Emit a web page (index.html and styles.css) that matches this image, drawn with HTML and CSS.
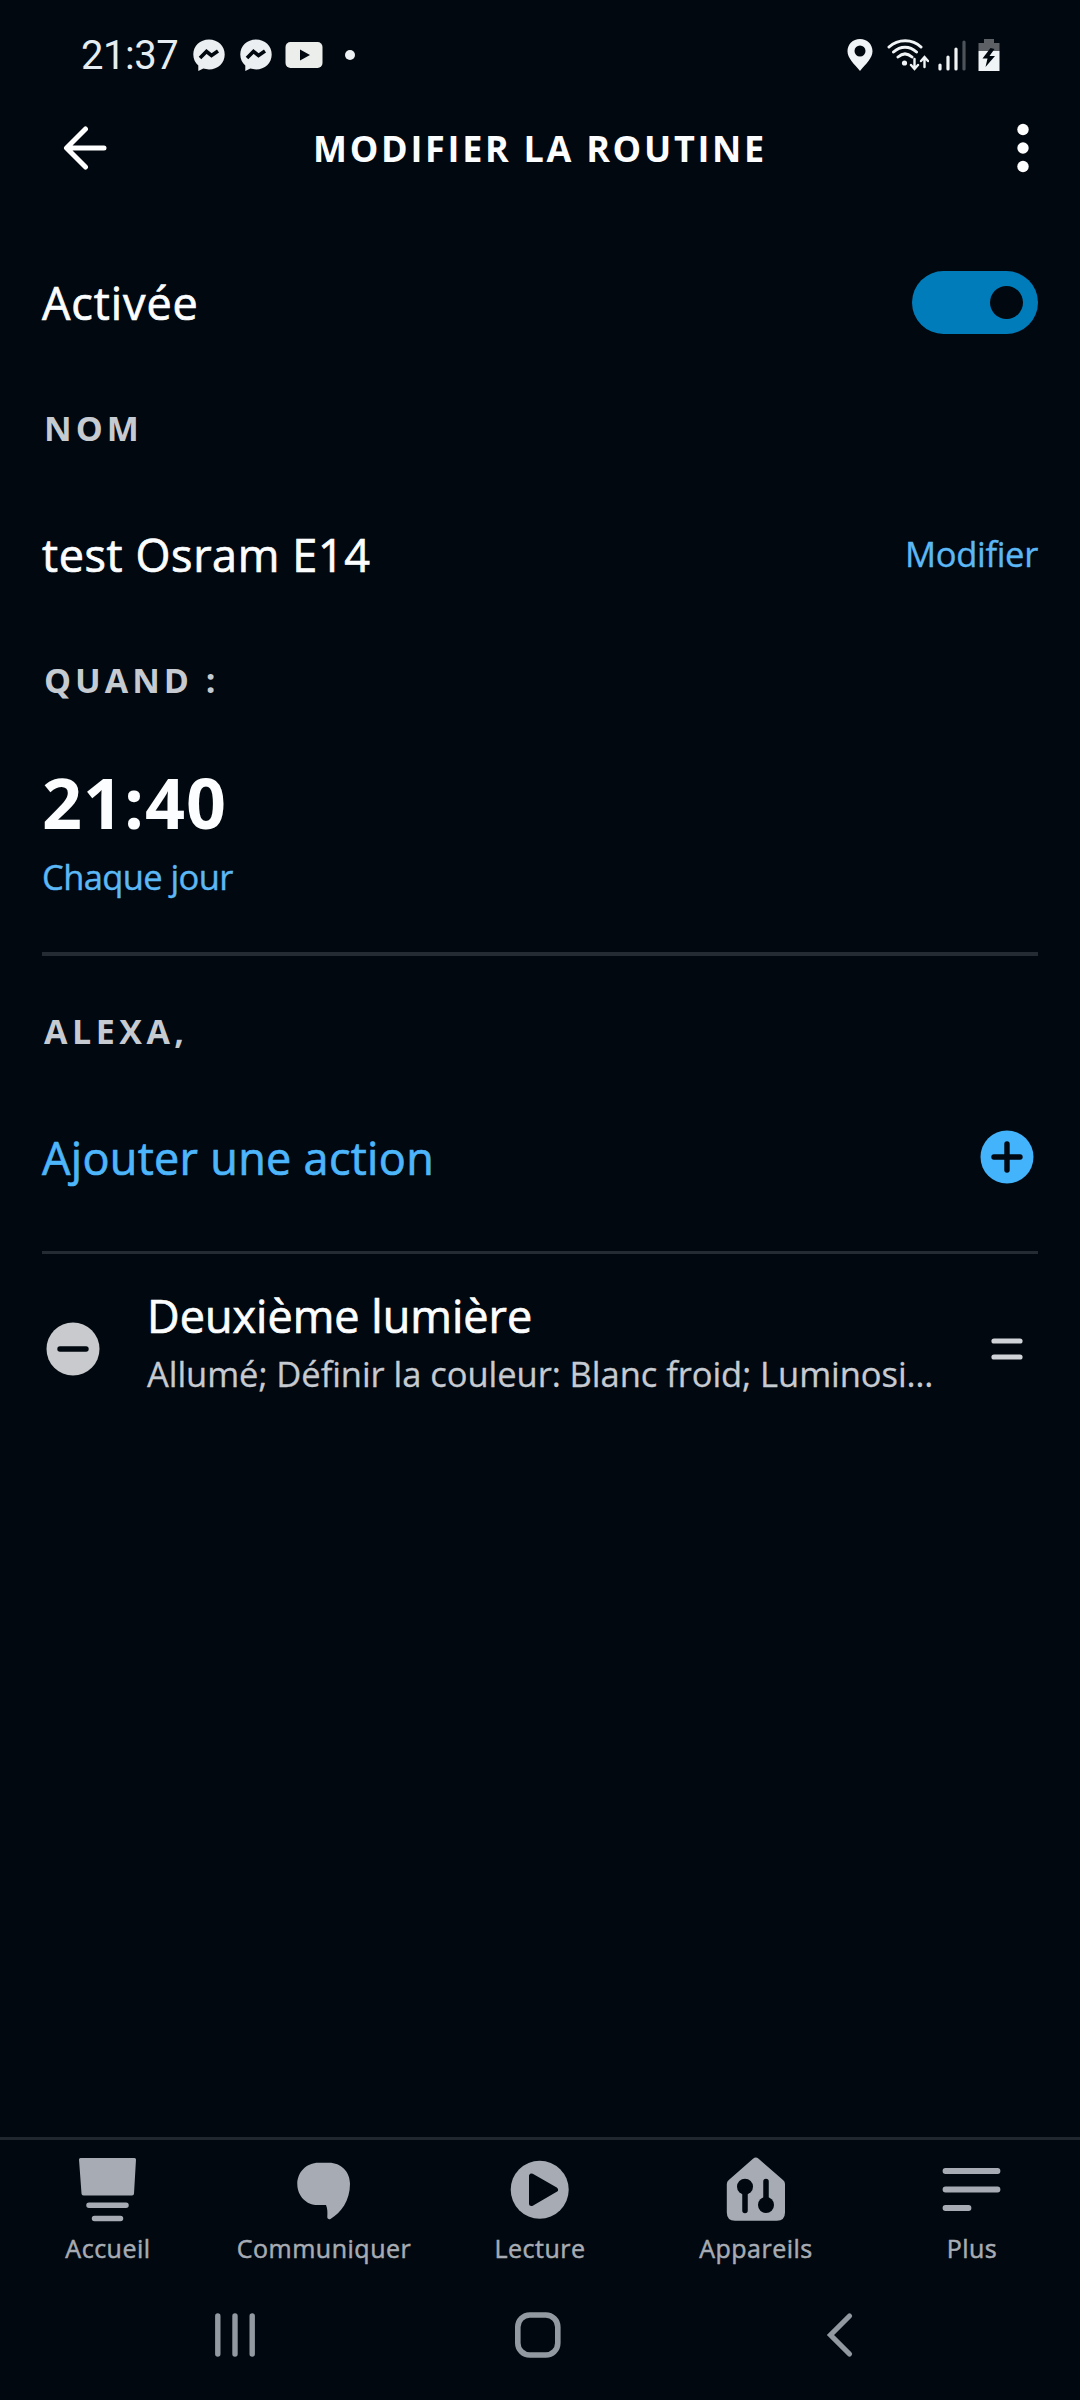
FILE: index.html
```html
<!DOCTYPE html>
<html lang="fr">
<head>
  <meta charset="UTF-8" />
  <title>Modifier la routine</title>
  <link rel="stylesheet" href="styles.css">
</head>
<body>

  <div class="status-bar">
    <span class="clock">21:37</span>
    <svg class="messenger" width="32" height="32" viewBox="0 0 32 32">
      <path d="M16 .5C7 .5 .3 7 .3 15.5c0 4.600 1.900 8.300 5 11V32l5-2.400c1.800.5 3.700.8 5.700.8 9 0 15.700-6.500 15.700-15S25 .5 16 .5z" fill="#eceff2"/>
      <path d="M7 19l6.500-6.500 5 4 6.500-4.500" fill="none" stroke="#01080f" stroke-width="3.600"/>
    </svg>
    <svg class="messenger" width="32" height="32" viewBox="0 0 32 32">
      <path d="M16 .5C7 .5 .3 7 .3 15.5c0 4.600 1.900 8.300 5 11V32l5-2.400c1.800.5 3.700.8 5.700.8 9 0 15.700-6.500 15.700-15S25 .5 16 .5z" fill="#eceff2"/>
      <path d="M7 19l6.500-6.500 5 4 6.500-4.500" fill="none" stroke="#01080f" stroke-width="3.600"/>
    </svg>
    <svg class="youtube" width="38" height="26" viewBox="0 0 38 26">
      <rect x="0.500" y="0" width="37" height="26" rx="5" fill="#eceeec"/>
      <path d="M15 7.500l10 5.500-10 5.500z" fill="#01080f"/>
    </svg>
    <span class="dot"></span>
    <div class="status-right">
      <svg width="26" height="32" viewBox="0 0 26 32">
        <path d="M13 0C5.800 0 .5 5.300 .5 12.300 .5 19 7 25 13 32c6-7 12.500-13 12.500-19.700C25.500 5.300 20.200 0 13 0z" fill="#f1f4f6"/>
        <circle cx="13" cy="12" r="5.500" fill="#01080f"/>
      </svg>
      <svg class="wifi" width="42" height="32" viewBox="0 0 42 32">
        <g fill="none" stroke="#f1f4f6" stroke-width="3" stroke-linecap="round">
          <path d="M2 8c9-8.500 23.500-8.500 32 0M6.500 13c7-6.500 16-6.500 23 0M11 18c4.500-4 9.500-4 14 0"/>
          <path d="M27.500 20v9M24 26l3.500 4 3.500-4M37.500 28v-9M34 22l3.500-4 3.500 4" stroke-width="2.400"/>
        </g>
        <circle cx="17.500" cy="24" r="2.600" fill="#f1f4f6"/>
      </svg>
      <svg class="signal" width="28" height="32" viewBox="0 0 28 32">
        <g stroke-width="3.200" stroke-linecap="round" stroke="#f1f4f6">
          <path d="M2 26v4M10 18v12M18 10v20"/>
          <path d="M26 3v27" stroke="#4d5359"/>
        </g>
      </svg>
      <svg width="22" height="32" viewBox="0 0 22 32">
        <path d="M6 0h10v4h5.500v8H.5V4H6z" fill="#5d6165"/>
        <path d="M.5 12h21v20H.5z" fill="#f1f4f6"/>
        <path d="M12.500 9L4.500 19.500h5L7.500 28 17 17h-5.500l5-7z" fill="#01080f"/>
      </svg>
    </div>
  </div>

  <header class="header">
    <svg width="44" height="44" viewBox="0 0 44 44">
      <path d="M41 22H4M22.500 3L3.500 22l19 19" fill="none" stroke="#fff" stroke-width="5" stroke-linecap="round" stroke-linejoin="round"/>
    </svg>
    <h1>MODIFIER LA ROUTINE</h1>
    <svg class="menu" width="12" height="50" viewBox="0 0 12 50">
      <g fill="#fff"><circle cx="6" cy="6.500" r="5.700"/><circle cx="6" cy="25" r="5.700"/><circle cx="6" cy="43.500" r="5.700"/></g>
    </svg>
  </header>

  <main>
    <div class="row">
      <span class="text activated">Activée</span>
      <div class="toggle"><div class="knob"></div></div>
    </div>

    <h2>NOM</h2>
    <div class="row">
      <span class="text name">test Osram E14</span>
      <a class="link">Modifier</a>
    </div>

    <h2>QUAND :</h2>
    <div class="when">
      <div class="time">21:40</div>
      <a class="link">Chaque jour</a>
    </div>

    <h2 class="alexa">ALEXA,</h2>
    <div class="add-action">
      <span class="text">Ajouter une action</span>
      <svg width="54" height="54" viewBox="0 0 54 54">
        <circle cx="27" cy="27" r="26.500" fill="#43b3fc"/>
        <path d="M14 27h26M27 14v26" stroke="#01080f" stroke-width="5.400" stroke-linecap="round"/>
      </svg>
    </div>

    <div class="action">
      <svg width="54" height="54" viewBox="0 0 54 54">
        <circle cx="27" cy="27" r="26.500" fill="#c8cacd"/>
        <path d="M14 27h26" stroke="#01080f" stroke-width="5.400" stroke-linecap="round"/>
      </svg>
      <div class="action-info">
        <div class="text device">Deuxième lumière</div>
        <div class="details">Allumé; Définir la couleur: Blanc froid; Luminosi…</div>
      </div>
      <svg class="handle" width="32" height="22" viewBox="0 0 32 22">
        <path d="M3 3h26M3 19h26" stroke="#d0d3d8" stroke-width="5.200" stroke-linecap="round"/>
      </svg>
    </div>
  </main>

  <nav class="tabs">
    <div class="tab">
      <svg width="68" height="68" viewBox="0 0 68 68">
        <path d="M6.500 4h54q1.500 0 1.500 1.500l-2 34q0 2-2 2H9.500q-2 0-2-2l-2.500-34Q5 4 6.500 4z" fill="#a7acb4"/>
        <path d="M15 51.300h37M20.500 64.500h26" stroke="#a7acb4" stroke-width="5.500" stroke-linecap="round"/>
      </svg>
      <span>Accueil</span>
    </div>
    <div class="tab">
      <svg width="68" height="68" viewBox="0 0 68 68">
        <path d="M28.500 8.700h10.500c12 0 21 9 21 21 0 17-9 29-19.500 35.200-1.500.8-3.300 0-3.200-1.800.3-5 .2-8.500-1.300-12H28c-12 0-20.700-9.500-20.700-21.200S16.500 8.700 28.500 8.700z" fill="#a7acb4"/>
      </svg>
      <span>Communiquer</span>
    </div>
    <div class="tab">
      <svg width="68" height="68" viewBox="0 0 68 68">
        <circle cx="33.700" cy="35.700" r="29" fill="#a7acb4"/>
        <path d="M25.500 22v27.500l24-13.800z" fill="#01080f" stroke="#01080f" stroke-width="5" stroke-linejoin="round"/>
      </svg>
      <span>Lecture</span>
    </div>
    <div class="tab">
      <svg width="68" height="68" viewBox="0 0 68 68">
        <path d="M31 4.800q2.800-2.600 5.600 0L61 26q2 1.700 2 4v28.500q0 8.200-8.200 8.200H13q-8.200 0-8.200-8.200V30q0-2.300 2-4z" fill="#a7acb4"/>
        <g fill="#01080f" stroke="#01080f" stroke-linecap="round">
          <circle cx="23" cy="32.700" r="8" stroke="none"/><circle cx="44" cy="51" r="8" stroke="none"/>
          <path d="M23 35v21.500M44 27.500V50" stroke-width="5.500"/>
        </g>
      </svg>
      <span>Appareils</span>
    </div>
    <div class="tab">
      <svg width="68" height="68" viewBox="0 0 68 68">
        <path d="M7.500 17h52M7.500 35.500h52M7.500 54h23" stroke="#a7acb4" stroke-width="5.800" stroke-linecap="round"/>
      </svg>
      <span>Plus</span>
    </div>
  </nav>

  <div class="system-nav">
    <svg width="48" height="48" viewBox="0 0 48 48">
      <path d="M6.800 5v38M24 5v38M41.200 5v38" stroke="#9399a0" stroke-width="5.400" stroke-linecap="round"/>
    </svg>
    <svg width="48" height="48" viewBox="0 0 48 48">
      <rect x="3.800" y="4" width="40" height="40" rx="12" fill="none" stroke="#9399a0" stroke-width="5.600"/>
    </svg>
    <svg width="48" height="48" viewBox="0 0 48 48">
      <path d="M33.500 5L14.500 24l19 19" fill="none" stroke="#9399a0" stroke-width="5.200" stroke-linecap="round"/>
    </svg>
  </div>

</body>
</html>
```

FILE: styles.css
```css
* {
  box-sizing: border-box;
}

body {
  font-family: "Open Sans", "Noto Sans", sans-serif;
  background: #01080f;
  color: #fbfdfe;
  margin: 0;
  height: 2400px;
  display: flex;
  flex-direction: column;
}

svg {
  display: block;
  flex-shrink: 0;
}

/* Status bar */
.status-bar {
  height: 110px;
  display: flex;
  align-items: center;
  padding: 0 80px 0 81px;
}

.clock {
  font-family: Roboto, sans-serif;
  font-size: 40px;
  letter-spacing: -0.5px;
  width: 112px;
  color: #e6edf2;
}

.messenger {
  margin-right: 15px;
}

.youtube {
  margin-left: -2px;
}

.dot {
  width: 10px;
  height: 10px;
  border-radius: 50%;
  background: #eef1f3;
  margin-left: 22px;
}

.status-right {
  display: flex;
  align-items: center;
  margin-left: auto;
}

.wifi {
  margin-left: 14px;
}

.signal {
  margin: 0 12px 0 9px;
}

/* Header */
.header {
  height: 76px;
  display: grid;
  grid-template-columns: 1fr auto 1fr;
  align-items: center;
  padding: 0 51px 0 51px;
}

.header svg:first-child {
  margin-left: 12px;
}

.menu {
  justify-self: end;
}

h1 {
  margin: 0;
  font-size: 36px;
  font-weight: 700;
  letter-spacing: 2.7px;
  white-space: nowrap;
}

/* Routine */
main {
  flex: 1;
  padding: 56px 42px 0;
}

.row {
  height: 120px;
  display: flex;
  align-items: center;
  justify-content: space-between;
}

.text {
  font-size: 45px;
  letter-spacing: 0.3px;
  white-space: nowrap;
  -webkit-text-stroke: 0.7px currentColor;
}

.text.activated {
  letter-spacing: 0.9px;
}

.text.name {
  letter-spacing: 0.6px;
}

.link {
  font-size: 34.5px;
  letter-spacing: -0.3px;
  padding-bottom: 2px;
  color: #5cb8f5;
  -webkit-text-stroke: 0.4px currentColor;
}

h2 {
  margin: 0;
  padding-left: 2px;
  font-size: 34px;
  font-weight: 700;
  line-height: 132px;
  letter-spacing: 4px;
  color: #c6cad1;
}

h2.alexa {
  line-height: 150px;
  letter-spacing: 4.5px;
}

.toggle {
  width: 126px;
  height: 63px;
  border-radius: 32px;
  background: #007cba;
  display: flex;
  align-items: center;
  justify-content: flex-end;
  padding-right: 15px;
}

.knob {
  width: 33px;
  height: 33px;
  border-radius: 50%;
  background: #01080f;
}

.when {
  height: 210px;
  border-bottom: 4px solid #252b32;
}

.time {
  font-size: 70px;
  font-weight: 700;
  line-height: 112px;
  letter-spacing: 1px;
}

.when .link {
  display: block;
  line-height: 38px;
  letter-spacing: -0.6px;
}

.add-action {
  height: 148px;
  padding: 0 4px 43px 0;
  display: flex;
  align-items: center;
  justify-content: space-between;
  border-bottom: 3px solid #252b32;
  color: #4db5fa;
}

.action {
  height: 189px;
  display: flex;
  align-items: center;
  padding: 0 15px 0 4px;
}

.action-info {
  flex: 1;
  margin-left: 47px;
  padding-bottom: 9px;
}

.text.device {
  line-height: 60px;
  letter-spacing: 0;
}

.details {
  font-size: 34.5px;
  line-height: 56px;
  letter-spacing: -0.05px;
  white-space: nowrap;
  color: #c6cad1;
  -webkit-text-stroke: 0.3px currentColor;
}

/* Bottom tabs */
.tabs {
  height: 132px;
  display: flex;
  border-top: 3px solid #20262d;
}

.tab {
  flex: 1;
  display: flex;
  flex-direction: column;
  align-items: center;
  padding-top: 14px;
  font-size: 25px;
  line-height: 36px;
  letter-spacing: 0.5px;
  color: #a7acb4;
  -webkit-text-stroke: 0.5px currentColor;
}

.tab span {
  margin-top: 8px;
}

/* Android navigation */
.system-nav {
  height: 131px;
  display: flex;
  align-items: center;
  justify-content: space-between;
  padding: 0 216px 0 211px;
}
```
